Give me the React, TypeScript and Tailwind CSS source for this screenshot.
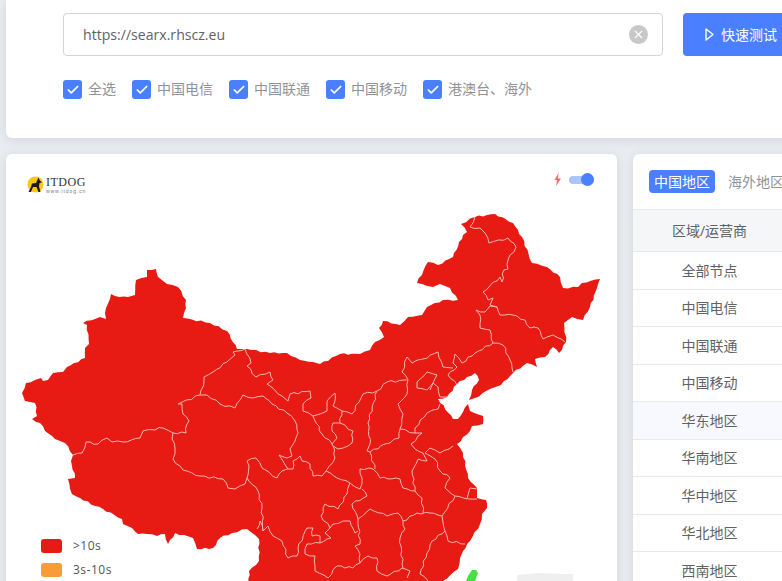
import React from "react";
import { Check, X } from "lucide-react";

const fontStack = "font-['Open_Sans','Noto_Sans_CJK_SC',sans-serif]";

const isps = [
  { label: "全选" },
  { label: "中国电信" },
  { label: "中国联通" },
  { label: "中国移动" },
  { label: "港澳台、海外" },
];

const regions = ["全部节点", "中国电信", "中国联通", "中国移动", "华东地区", "华南地区", "华中地区", "华北地区", "西南地区", "西北地区"];

const legend = [
  { label: ">10s", color: "bg-[#e71a14]" },
  { label: "3s-10s", color: "bg-[#f89c38]" },
];

// china outline, in page pixels (the svg viewBox starts at the card's corner)
const outline =
  "22,393 26,383 35,380 41,378 43,381 48,380 53,373 63,372 67,367 85,358 85,348 89,344 87,325 83,323 100,317 106,319 105,313 111,294 115,296 128,297 135,295 136,280 147,277 147,270 156,269 158,277 167,284 178,287 186,300 186,308 183,318 210,323 227,331 237,349 247,349 270,353 287,353 300,360 313,362 320,364 340,354 360,354 370,350 375,342 384,337 379,328 383,321 400,325 408,317 422,315 427,307 443,300 458,300 450,288 440,284 433,287 422,284 417,283 428,262 438,265 453,257 463,235 467,232 461,224 475,217 495,214 513,223 522,237 532,263 547,267 560,277 563,288 578,287 582,283 600,279 597,288 590,307 583,320 572,317 564,323 566,342 559,353 553,347 545,357 535,359 537,367 527,363 513,373 501,385 490,389 475,398 469,400 472,390 479,380 475,373 467,377 457,384 447,397 438,399 453,419 458,419 468,404 470,411 483,416 483,424 472,426 470,431 457,444 463,453 468,478 477,488 477,498 486,500 487,508 482,514 480,524 470,541 463,551 460,558 458,569 443,581 443,600 249,600 249,571 259,561 259,539 247,529 232,533 220,538 213,548 197,549 193,538 175,533 168,544 165,534 157,536 147,534 138,534 132,528 123,524 122,519 103,509 95,506 80,498 72,494 68,479 75,478 71,461 73,455 65,443 55,439 45,431 40,423 32,419 37,416 35,403 25,401";

const borders = [
  "73,455 82,453 86,442 98,444 107,438 112,442 123,442 140,438 143,431 163,428 173,433",
  "173,433 186,433 187,424 189,421 183,414 182,404 178,404 200,395 204,381 204,377 213,372 227,362 235,355 233,352 245,349",
  "245,349 251,363 247,366 256,377 270,372 273,380 267,384 282,396 288,401 290,394 310,391 311,398 303,404 303,411 313,416 327,411 327,401 335,393 335,401 333,406 342,411 352,414 363,394 377,391 387,382 408,380 402,372 407,357 412,363 423,359 438,352 443,367 453,368",
  "200,395 207,395 220,404 235,408 243,395 253,398 263,396 272,404 287,413 295,421 298,433 295,441 290,449 292,456 287,458 279,455 283,461 288,469",
  "173,433 172,439 175,448 173,459 183,470 200,476 223,479 228,488 235,489 245,484 247,478",
  "247,478 249,466 247,461 256,458 262,468 277,478 282,471 287,469 293,469 293,461 300,456 302,461 310,464 313,476 322,476 326,471 337,478 350,483 360,489",
  "247,478 258,491 262,508 263,531",
  "257,529 260,521 263,531 268,526 273,536 282,541 288,558 297,556 298,548 307,528 313,528 312,536 320,536 320,543 307,544 305,554 315,556 315,571 328,578 337,566 353,568 360,563",
  "350,483 347,494 338,509 325,504 321,516 330,528 333,524 343,521 350,521 355,533 358,531",
  "330,528 325,533 331,538 320,543",
  "358,519 360,544 355,546 360,554 360,563 368,556 377,558 377,571 387,576 402,568 410,571 407,578",
  "358,519 352,504 367,496 362,489",
  "358,519 370,509 387,516 398,513 403,521 417,513 430,513 442,516",
  "403,521 405,529 400,538 403,568",
  "442,516 445,531 432,541 427,553 420,574 428,581",
  "415,491 422,498 423,513",
  "445,531 448,541 465,544",
  "442,516 455,496 445,488 450,478 440,471 435,459 425,453 430,448 440,453 453,446",
  "455,496 467,499 470,488 477,489",
  "468,499 477,499",
  "360,489 362,478 360,469 373,469 380,478 400,479 403,488 415,491 412,471 418,459 427,461 423,453 415,449 411,444 422,433 415,433 400,429",
  "400,429 399,438 385,444 370,452 367,451",
  "370,452 375,469",
  "377,391 368,423 370,444 367,451",
  "408,380 407,394 398,404 403,414 400,429",
  "415,433 415,428 427,413 438,409 440,404",
  "313,416 322,434 332,444 333,446",
  "342,411 340,423 333,423 332,431 337,438 332,444",
  "340,423 353,431 352,443 343,448 338,449 333,446 335,458 326,471",
  "493,343 475,353 462,363 455,354 453,363 457,367 448,375 457,385",
  "493,343 503,345 510,360 513,372",
  "476,310 480,315 480,328 490,330 493,343",
  "476,310 485,312 490,306 497,307",
  "497,307 500,315 513,315 525,320 530,328 538,328 543,339 553,335 565,342",
  "475,217 470,227 480,228 485,233 489,243 508,238 516,247 508,260 508,269 504,270 502,282 500,277 483,292 488,300 493,298 490,305 497,307",
  "427,372 417,382 417,388 427,390 433,383 437,375 427,372",
  "430,390 433,383 438,387 440,397 447,397",
];

// the real borders wiggle: split long segments and nudge the new points a little
function roughen(points: string, amount: number) {
  const pts = points.split(" ").map((p) => p.split(",").map(Number));
  const out: string[] = [];
  pts.forEach(([x, y], i) => {
    out.push(`${x},${y}`);
    const next = pts[i + 1];
    if (!next) return;
    const len = Math.hypot(next[0] - x, next[1] - y);
    const steps = Math.floor(len / 4);
    for (let s = 1; s < steps; s++) {
      const t = s / steps;
      const wave = Math.sin((x + y) * 3.1 + s * 2.4) * amount;
      const nx = (-(next[1] - y) / len) * wave;
      const ny = ((next[0] - x) / len) * wave;
      out.push(`${(x + (next[0] - x) * t + nx).toFixed(1)},${(y + (next[1] - y) * t + ny).toFixed(1)}`);
    }
  });
  return out.join(" ");
}

function ChinaMap() {
  return (
    <svg className="absolute left-0 top-0" width="611" height="427" viewBox="6 154 611 427">
      <polygon points={roughen(outline, 0.8)} fill="#e71a14" />
      {borders.map((points, i) => (
        <polyline key={i} points={roughen(points, 1)} fill="none" stroke="#f9b6b2" strokeWidth="1" />
      ))}
      <polygon points="466,581 468,576 472,570 476,570 478,573 475,581" fill="#44e044" />
      <polygon points="517,575 538,573 566,574 573,574 573,581 517,581" fill="#efefef" />
    </svg>
  );
}

function Logo() {
  return (
    <div className="flex items-center">
      <svg width="17" height="17" viewBox="0 0 17 17">
        <circle cx="8.5" cy="8.5" r="8" fill="#fbc70f" />
        <path d="M1.5 16 L4 11 L5 7.5 L9 7 L11.5 1.5 L12.5 4 L15 6.5 L12.5 7 L12 10.5 L13.5 16 L11.5 16 L9.5 11 L6 11 L4 16 Z" fill="#1c1a17" />
      </svg>
      <div className="ml-[2px] flex flex-col">
        <span className="font-['Liberation_Serif',serif] text-[12px] leading-[11px] tracking-[0.5px] text-[#333]">ITDOG</span>
        <span className="mt-px font-['Liberation_Sans',sans-serif] text-[5px] leading-[4px] tracking-[0.9px] text-[#777]">www.itdog.cn</span>
      </div>
    </div>
  );
}

export default function App() {
  return (
    <div className={`h-[581px] w-[782px] overflow-hidden bg-[#e9edf2] pl-[6px] ${fontStack}`}>
      {/* test form */}
      <div className="h-[138px] w-[900px] rounded-b-md bg-white pl-[57px] pt-[13px] shadow-[0_2px_12px_rgba(0,0,0,0.1)]">
        <div className="flex items-center gap-5">
          <div className="flex h-[43px] w-[600px] items-center justify-between rounded border border-[#d3d4d6] pl-[19px] pr-[14px]">
            <span className="text-[14.1px] text-[#606266]">https://searx.rhscz.eu</span>
            <span className="flex h-[19px] w-[19px] items-center justify-center rounded-full bg-[#c8c8c8]">
              <X size={13} color="#fff" strokeWidth={2} />
            </span>
          </div>
          <button className="flex h-[43px] w-[130px] items-center gap-[7px] rounded bg-[#4a7fff] pb-px pl-[22px] text-[14px] text-white">
            <svg width="9" height="13" viewBox="0 0 9 13" fill="none">
              <path d="M1 1 L8 6.5 L1 12 Z" stroke="#fff" strokeWidth="1.4" strokeLinejoin="round" />
            </svg>
            快速测试
          </button>
        </div>
        <div className="mt-[22px] flex items-center gap-4">
          {isps.map((isp) => (
            <label key={isp.label} className="flex items-center gap-[6px] text-[14px] text-[#909399]">
              <span className="flex h-[19px] w-[19px] items-center justify-center rounded-[3px] bg-[#4a7fff]">
                <Check size={14} color="#fff" strokeWidth={3} />
              </span>
              <span className="pb-[2px]">{isp.label}</span>
            </label>
          ))}
        </div>
      </div>

      <div className="mt-4 flex gap-4">
        {/* map */}
        <div className="relative h-[500px] w-[611px] shrink-0 rounded-md bg-white shadow-[0_2px_12px_rgba(0,0,0,0.1)]">
          <ChinaMap />
          <div className="absolute left-[21px] top-[22px]">
            <Logo />
          </div>
          <div className="absolute right-[23px] top-[19px] flex items-center gap-[7px]">
            <svg width="9" height="13" viewBox="0 0 9 13">
              <path d="M5.5 0 L1.5 7 L4 7 L3 13 L8 5.5 L5 5.5 Z" fill="#f56c6c" />
            </svg>
            <span className="relative h-2 w-[25px] rounded-full bg-[#a9c4ff]">
              <span className="absolute -top-[2.5px] right-0 h-[13px] w-[13px] rounded-full bg-[#4a7fff]" />
            </span>
          </div>
          <div className="absolute left-[35px] top-[383px] flex flex-col gap-[6px]">
            {legend.map((item) => (
              <div key={item.label} className="flex items-center gap-[11px] text-[12px] tracking-[0.5px] text-[#555]">
                <span className={`h-[14px] w-[21px] rounded-[3px] ${item.color}`} />
                {item.label}
              </div>
            ))}
          </div>
        </div>

        {/* region table */}
        <div className="w-[300px] shrink-0 rounded-md bg-white shadow-[0_2px_12px_rgba(0,0,0,0.1)]">
          <div className="flex h-[56px] items-center gap-[13px] border-b border-[#e6e9ee] pl-4 text-[14px]">
            <span className="rounded bg-[#4a7fff] px-[5px] py-px text-white">中国地区</span>
            <span className="text-[#909399]">海外地区</span>
          </div>
          <div className="flex h-[42px] w-[153px] items-center justify-center border-b border-[#e6e9ee] bg-[#f5f6f7] text-[14px] text-[#606266]">
            区域/运营商
          </div>
          {regions.map((region) => (
            <div
              key={region}
              className={`flex h-[37.5px] w-[153px] items-center justify-center border-b border-[#e6e9ee] text-[14px] text-[#606266] ${
                region === "华东地区" ? "bg-[#f8f9fe]" : ""
              }`}
            >
              {region}
            </div>
          ))}
        </div>
      </div>
    </div>
  );
}
